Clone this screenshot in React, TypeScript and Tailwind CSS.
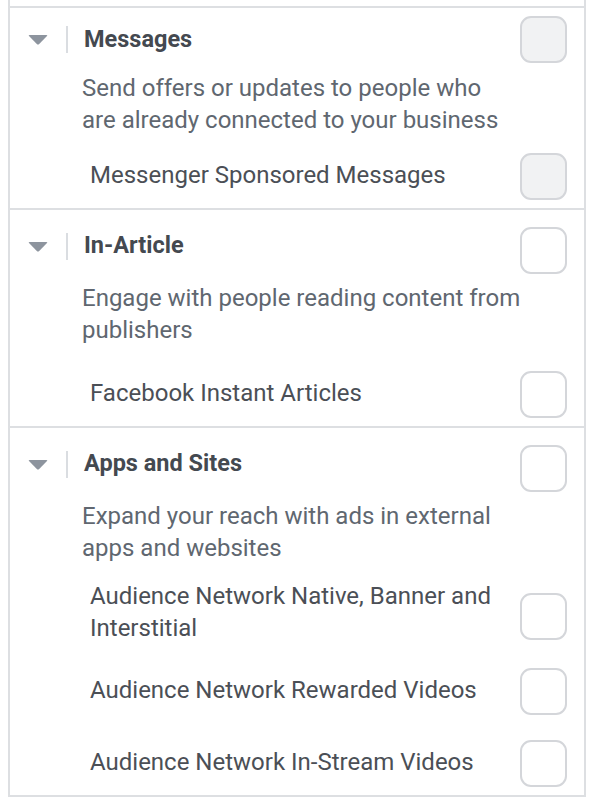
import React from "react";

type Item = { label: string[]; gap: string; boxAlign?: string };

type Section = {
  title: string;
  titlePad: string;
  desc: string[];
  disabled?: boolean;
  pad: string;
  descGap: string;
  items: Item[];
};

const sections: Section[] = [
  {
    title: "Messages",
    titlePad: "pb-0",
    desc: ["Send offers or updates to people who", "are already connected to your business"],
    disabled: true,
    pad: "pt-[8px]",
    descGap: "mt-[9px]",
    items: [{ label: ["Messenger Sponsored Messages"], gap: "mt-[17px]" }],
  },
  {
    title: "In-Article",
    titlePad: "pb-[9px]",
    desc: ["Engage with people reading content from", "publishers"],
    pad: "pt-[17px]",
    descGap: "mt-[8px]",
    items: [{ label: ["Facebook Instant Articles"], gap: "mt-[25px]" }],
  },
  {
    title: "Apps and Sites",
    titlePad: "pb-[9px]",
    desc: ["Expand your reach with ads in external", "apps and websites"],
    pad: "pt-[17px]",
    descGap: "mt-[8px]",
    items: [
      {
        label: ["Audience Network Native, Banner and", "Interstitial"],
        gap: "mt-[16px]",
        boxAlign: "self-start mt-[13px]",
      },
      { label: ["Audience Network Rewarded Videos"], gap: "mt-[24px]" },
      { label: ["Audience Network In-Stream Videos"], gap: "mt-[25px]" },
    ],
  },
];

function Box({ disabled, className = "" }: { disabled?: boolean; className?: string }) {
  return (
    <div
      className={
        "h-[47px] w-[47px] shrink-0 rounded-[11px] border-2 border-[#d4d6da] " +
        (disabled ? "bg-[#f1f2f3] " : "bg-white ") +
        className
      }
    />
  );
}

function Caret() {
  return (
    <svg width="20" height="11" viewBox="0 0 20 11" className="shrink-0">
      <path d="M1.5 1 H18.5 Q19.8 1 19 2.1 L11.2 10 Q10 11.2 8.8 10 L1 2.1 Q0.2 1 1.5 1 Z" fill="#8d949e" />
    </svg>
  );
}

export default function App() {
  return (
    <div
      className="h-[802px] w-[596px] bg-white"
      style={{ fontFamily: "Roboto, 'Liberation Sans', sans-serif" }}
    >
      <div className="ml-[8px] w-[578px] border-x-2 border-b-2 border-[#dddfe2]">
        <div className="h-[6px]" />
        {sections.map((s) => (
          <div key={s.title} className={"border-t-2 border-[#dddfe2] pb-[8px] pl-[18px] pr-[17px] " + s.pad}>
            <div className="flex h-[47px] items-center">
              <div className={"flex items-center " + s.titlePad}>
                <Caret />
                <div className="ml-[18px] h-[27px] w-[2px] bg-[#dadde1]" />
                <div className="ml-[16px] text-[23.5px] font-bold text-[#444950]">{s.title}</div>
              </div>
              <Box disabled={s.disabled} className="ml-auto" />
            </div>
            <div className={"pl-[54px] text-[24px] leading-[32px] text-[#606770] " + s.descGap}>
              {s.desc.map((l) => (
                <div key={l}>{l}</div>
              ))}
            </div>
            {s.items.map((it) => (
              <div key={it.label[0]} className={"flex items-center justify-between " + it.gap}>
                <div
                  className={
                    "pl-[62px] text-[24px] leading-[32px] text-[#4b4f56] " +
                    (it.label.length > 1 ? "" : "pb-[4px]")
                  }
                >
                  {it.label.map((l) => (
                    <div key={l}>{l}</div>
                  ))}
                </div>
                <Box disabled={s.disabled} className={it.boxAlign ?? ""} />
              </div>
            ))}
          </div>
        ))}
      </div>
    </div>
  );
}
